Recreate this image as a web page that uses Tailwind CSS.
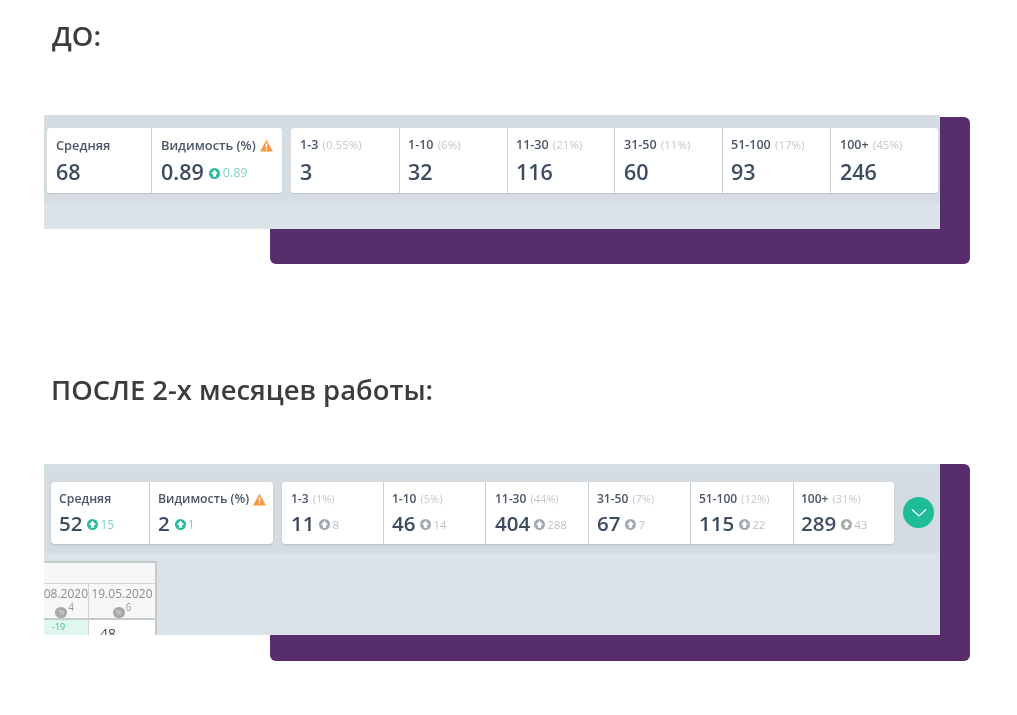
<!DOCTYPE html>
<html lang="ru">
<head>
  <meta charset="UTF-8">
  <meta name="viewport" content="width=device-width, initial-scale=1.0">
  <title>До и после</title>
  <script src="https://cdn.jsdelivr.net/npm/@tailwindcss/browser@4"></script>
</head>
<body class="bg-white h-[715px] overflow-hidden font-['Open_Sans',sans-serif]">
  <svg class="hidden">
    <symbol id="up" viewBox="0 0 12 12"><circle cx="6" cy="6" r="6" fill="currentColor"/><path d="M6 2 10 6.2H7.8v3.4H4.2V6.2H2z" fill="#fff"/></symbol>
    <symbol id="warn" viewBox="0 0 14 13"><path d="M7 .3 13.9 13H.1z" fill="#f6993f"/><path d="M6.2 4.4h1.6v4.2H6.2zM6.2 9.6h1.6v1.6H6.2z" fill="#fff"/></symbol>
  </svg>

  <h2 class="h-[115px] pt-[18px] pl-[52px] text-[27.4px] leading-[36px] font-semibold text-[#3c3c3c] blur-[0.3px]">ДО:</h2>

  <!-- before -->
  <section class="relative ml-[44px] w-[926px] h-[149px] blur-[0.4px]">
    <div class="absolute left-[226px] right-0 top-[2px] bottom-0 rounded-[6px] bg-[#572d6c]"></div>
    <div class="relative w-[896px] h-[114px] bg-[#dbe2e8]">
      <div class="h-[88px] bg-[#d5dde3] pt-[13px] pl-[3px] flex text-[#4a5568]">
        <div class="w-[235px] h-[65px] bg-white rounded-[3px] shadow-[0_1px_1px_#bcc5cc] flex">
          <div class="w-[105px] pl-[9px] pt-[8px] border-r border-[#c9ced2]">
            <div class="text-[12.8px] leading-[18px] font-semibold">Средняя</div>
            <div class="text-[21.5px] leading-[30px] mt-[3px] font-semibold text-[#3e4c62]">68</div>
          </div>
          <div class="flex-1 pl-[9px] pt-[8px]">
            <div class="text-[12.8px] leading-[18px] font-semibold flex items-center gap-[4px] whitespace-nowrap">Видимость (%) <svg class="w-[13px] h-[13px]"><use href="#warn"/></svg></div>
            <div class="flex items-center mt-[3px]">
              <span class="text-[21.5px] leading-[30px] font-semibold text-[#3e4c62]">0.89</span>
              <svg class="w-[11px] h-[11px] ml-[5px] mt-[2px] text-[#2bb799]"><use href="#up"/></svg>
              <span class="text-[12.5px] ml-[3px] mt-[2px] text-[#7fd3bf]">0.89</span>
            </div>
          </div>
        </div>
        <div class="ml-[9px] w-[647px] h-[65px] bg-white rounded-[3px] shadow-[0_1px_1px_#bcc5cc] flex">
          <div class="w-[109px] pl-[9px] pt-[8px] border-r border-[#c9ced2]">
            <div class="text-[12.5px] leading-[18px] font-semibold whitespace-nowrap">1-3 <span class="font-normal text-[#c2c7cc] text-[11.5px] ml-[1px]">(0.55%)</span></div>
            <div class="text-[21.5px] leading-[30px] mt-[3px] font-semibold text-[#3e4c62]">3</div>
          </div>
          <div class="w-[108px] pl-[8px] pt-[8px] border-r border-[#c9ced2]">
            <div class="text-[12.5px] leading-[18px] font-semibold whitespace-nowrap">1-10 <span class="font-normal text-[#c2c7cc] text-[11.5px] ml-[1px]">(6%)</span></div>
            <div class="text-[21.5px] leading-[30px] mt-[3px] font-semibold text-[#3e4c62]">32</div>
          </div>
          <div class="w-[107px] pl-[8px] pt-[8px] border-r border-[#c9ced2]">
            <div class="text-[12.5px] leading-[18px] font-semibold whitespace-nowrap">11-30 <span class="font-normal text-[#c2c7cc] text-[11.5px] ml-[1px]">(21%)</span></div>
            <div class="text-[21.5px] leading-[30px] mt-[3px] font-semibold text-[#3e4c62]">116</div>
          </div>
          <div class="w-[108px] pl-[9px] pt-[8px] border-r border-[#c9ced2]">
            <div class="text-[12.5px] leading-[18px] font-semibold whitespace-nowrap">31-50 <span class="font-normal text-[#c2c7cc] text-[11.5px] ml-[1px]">(11%)</span></div>
            <div class="text-[21.5px] leading-[30px] mt-[3px] font-semibold text-[#3e4c62]">60</div>
          </div>
          <div class="w-[108px] pl-[8px] pt-[8px] border-r border-[#c9ced2]">
            <div class="text-[12.5px] leading-[18px] font-semibold whitespace-nowrap">51-100 <span class="font-normal text-[#c2c7cc] text-[11.5px] ml-[1px]">(17%)</span></div>
            <div class="text-[21.5px] leading-[30px] mt-[3px] font-semibold text-[#3e4c62]">93</div>
          </div>
          <div class="flex-1 pl-[9px] pt-[8px]">
            <div class="text-[12.5px] leading-[18px] font-semibold whitespace-nowrap">100+ <span class="font-normal text-[#c2c7cc] text-[11.5px] ml-[1px]">(45%)</span></div>
            <div class="text-[21.5px] leading-[30px] mt-[3px] font-semibold text-[#3e4c62]">246</div>
          </div>
        </div>
      </div>
    </div>
  </section>

  <h2 class="h-[200px] pt-[108px] pl-[51px] text-[27.4px] leading-[36px] font-semibold text-[#3c3c3c] blur-[0.3px]">ПОСЛЕ 2-х месяцев работы:</h2>

  <!-- after -->
  <section class="relative ml-[44px] w-[926px] h-[197px] blur-[0.4px]">
    <div class="absolute left-[226px] right-0 top-0 bottom-0 rounded-[6px] bg-[#572d6c]"></div>
    <div class="relative w-[896px] h-[171px] bg-[#dbe2e8] overflow-hidden">
      <div class="h-[89px] bg-[#d4dce1] border-t-[9px] border-[#d4dfe4] pt-[9px] pl-[7px] flex text-[#4a5568]">
        <div class="w-[222px] h-[62px] bg-white rounded-[4px] shadow-[0_1px_2px_#b4bdc4] flex">
          <div class="w-[99px] pl-[8px] pt-[8px] border-r border-[#c9ced2]">
            <div class="text-[12.3px] leading-[18px] font-semibold">Средняя</div>
            <div class="flex items-center mt-[1px]">
              <span class="text-[20.5px] leading-[29px] font-semibold text-[#3e4c62]">52</span>
              <svg class="w-[11px] h-[11px] ml-[5px] mt-[2px] text-[#2bb799]"><use href="#up"/></svg>
              <span class="text-[12px] ml-[2px] mt-[2px] text-[#7fd3bf]">15</span>
            </div>
          </div>
          <div class="flex-1 pl-[8px] pt-[8px]">
            <div class="text-[12.3px] leading-[18px] font-semibold flex items-center gap-[4px] whitespace-nowrap">Видимость (%) <svg class="w-[13px] h-[13px]"><use href="#warn"/></svg></div>
            <div class="flex items-center mt-[1px]">
              <span class="text-[20.5px] leading-[29px] font-semibold text-[#3e4c62]">2</span>
              <svg class="w-[11px] h-[11px] ml-[5px] mt-[2px] text-[#2bb799]"><use href="#up"/></svg>
              <span class="text-[12px] ml-[2px] mt-[2px] text-[#7fd3bf]">1</span>
            </div>
          </div>
        </div>
        <div class="ml-[9px] w-[612px] h-[62px] bg-white rounded-[3px] shadow-[0_1px_2px_#b4bdc4] flex">
          <div class="w-[102px] pl-[9px] pt-[8px] border-r border-[#c9ced2]">
            <div class="text-[12px] leading-[18px] font-semibold whitespace-nowrap">1-3 <span class="font-normal text-[#c2c7cc] text-[11px] ml-[1px]">(1%)</span></div>
            <div class="flex items-center mt-[1px]">
              <span class="text-[20.5px] leading-[29px] font-semibold text-[#3e4c62]">11</span>
              <svg class="w-[11px] h-[11px] ml-[5px] mt-[2px] text-[#a3a9ad]"><use href="#up"/></svg>
              <span class="text-[11.5px] ml-[2px] mt-[2px] text-[#bcc1c5]">8</span>
            </div>
          </div>
          <div class="w-[102px] pl-[8px] pt-[8px] border-r border-[#c9ced2]">
            <div class="text-[12px] leading-[18px] font-semibold whitespace-nowrap">1-10 <span class="font-normal text-[#c2c7cc] text-[11px] ml-[1px]">(5%)</span></div>
            <div class="flex items-center mt-[1px]">
              <span class="text-[20.5px] leading-[29px] font-semibold text-[#3e4c62]">46</span>
              <svg class="w-[11px] h-[11px] ml-[5px] mt-[2px] text-[#a3a9ad]"><use href="#up"/></svg>
              <span class="text-[11.5px] ml-[2px] mt-[2px] text-[#bcc1c5]">14</span>
            </div>
          </div>
          <div class="w-[103px] pl-[9px] pt-[8px] border-r border-[#c9ced2]">
            <div class="text-[12px] leading-[18px] font-semibold whitespace-nowrap">11-30 <span class="font-normal text-[#c2c7cc] text-[11px] ml-[1px]">(44%)</span></div>
            <div class="flex items-center mt-[1px]">
              <span class="text-[20.5px] leading-[29px] font-semibold text-[#3e4c62]">404</span>
              <svg class="w-[11px] h-[11px] ml-[4px] mt-[2px] text-[#a3a9ad]"><use href="#up"/></svg>
              <span class="text-[11.5px] ml-[2px] mt-[2px] text-[#bcc1c5]">288</span>
            </div>
          </div>
          <div class="w-[102px] pl-[8px] pt-[8px] border-r border-[#c9ced2]">
            <div class="text-[12px] leading-[18px] font-semibold whitespace-nowrap">31-50 <span class="font-normal text-[#c2c7cc] text-[11px] ml-[1px]">(7%)</span></div>
            <div class="flex items-center mt-[1px]">
              <span class="text-[20.5px] leading-[29px] font-semibold text-[#3e4c62]">67</span>
              <svg class="w-[11px] h-[11px] ml-[5px] mt-[2px] text-[#a3a9ad]"><use href="#up"/></svg>
              <span class="text-[11.5px] ml-[2px] mt-[2px] text-[#bcc1c5]">7</span>
            </div>
          </div>
          <div class="w-[103px] pl-[8px] pt-[8px] border-r border-[#c9ced2]">
            <div class="text-[12px] leading-[18px] font-semibold whitespace-nowrap">51-100 <span class="font-normal text-[#c2c7cc] text-[11px] ml-[1px]">(12%)</span></div>
            <div class="flex items-center mt-[1px]">
              <span class="text-[20.5px] leading-[29px] font-semibold text-[#3e4c62]">115</span>
              <svg class="w-[11px] h-[11px] ml-[5px] mt-[2px] text-[#a3a9ad]"><use href="#up"/></svg>
              <span class="text-[11.5px] ml-[2px] mt-[2px] text-[#bcc1c5]">22</span>
            </div>
          </div>
          <div class="flex-1 pl-[7px] pt-[8px]">
            <div class="text-[12px] leading-[18px] font-semibold whitespace-nowrap">100+ <span class="font-normal text-[#c2c7cc] text-[11px] ml-[1px]">(31%)</span></div>
            <div class="flex items-center mt-[1px]">
              <span class="text-[20.5px] leading-[29px] font-semibold text-[#3e4c62]">289</span>
              <svg class="w-[11px] h-[11px] ml-[5px] mt-[2px] text-[#a3a9ad]"><use href="#up"/></svg>
              <span class="text-[11.5px] ml-[2px] mt-[2px] text-[#bcc1c5]">43</span>
            </div>
          </div>
        </div>
        <div class="ml-[9px] mt-[15px] w-[31px] h-[31px] rounded-full bg-[#1fbc98] flex items-center justify-center">
          <svg class="w-[16px] h-[16px]" viewBox="0 0 16 16" fill="none" stroke="#fff" stroke-width="1.2"><path d="M1 4.5 8 11 15 4.5"/></svg>
        </div>
      </div>

      <!-- clipped piece of the table -->
      <div class="mt-[8px] w-[113px] h-[74px] border-t-2 border-r-2 border-[#c5cacd] bg-[#f7f7f7]">
        <div class="h-[21px] border-b border-[#d3d6d8]"></div>
        <div class="h-[36px] flex border-b-2 border-[#c5cacd] text-[12px] text-[#8b8f92]">
          <div class="w-[45px] border-r border-[#d3d6d8] overflow-hidden flex flex-col items-end">
            <span class="leading-[16px] mt-[2px] whitespace-nowrap">08.2020</span>
            <span class="flex items-start mr-[14px]"><span class="w-[12px] h-[11px] mt-[5px] rounded-full bg-[#a8a8a8] text-[7px] leading-[11px] text-center text-[#dddddd]">%</span><span class="ml-[1px] mt-[1px] text-[10px] leading-[9px] text-[#9a9a9a]">4</span></span>
          </div>
          <div class="flex-1 flex flex-col items-center">
            <span class="leading-[16px] mt-[2px] whitespace-nowrap">19.05.2020</span>
            <span class="flex items-start"><span class="w-[12px] h-[11px] mt-[5px] rounded-full bg-[#a8a8a8] text-[7px] leading-[11px] text-center text-[#dddddd]">%</span><span class="ml-[1px] mt-[1px] text-[10px] leading-[9px] text-[#9a9a9a]">6</span></span>
          </div>
        </div>
        <div class="h-[15px] flex bg-white overflow-hidden">
          <div class="w-[45px] bg-[#dff7ec] border-r border-[#d3d6d8] pl-[8px] text-[9px] leading-[14px] text-[#3fbf9b] whitespace-nowrap">-19</div>
          <div class="flex-1 pl-[11px] pt-[4px] text-[14px] leading-[20px] text-[#444]">48</div>
        </div>
      </div>
    </div>
  </section>
</body>
</html>
